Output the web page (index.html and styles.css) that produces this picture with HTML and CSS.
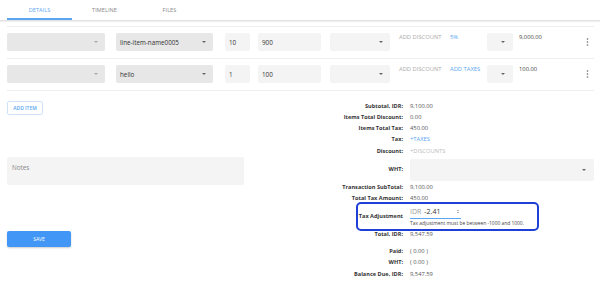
FILE: index.html
```html
<!DOCTYPE html>
<html>
<head>
<meta charset="utf-8">
<link rel="stylesheet" href="styles.css">
</head>
<body>
<div class="page">
  <nav class="tabs">
    <div class="tab active">DETAILS</div>
    <div class="tab">TIMELINE</div>
    <div class="tab">FILES</div>
  </nav>

  <div class="items">
    <div class="row">
      <div class="field f-type dark disabled"><span></span><i class="caret"></i></div>
      <div class="field f-name dark"><span>line-item-name0005</span><i class="caret"></i></div>
      <div class="field f-qty"><span>10</span></div>
      <div class="field f-price"><span>900</span></div>
      <div class="field f-unit"><span></span><i class="caret"></i></div>
      <div class="link f-disc muted">ADD DISCOUNT</div>
      <div class="link f-tax blue">5%</div>
      <div class="field f-taxsel"><span></span><i class="caret"></i></div>
      <div class="amount">9,000.00</div>
      <div class="menu"><svg width="3" height="8" viewBox="0 0 3 8"><circle cx="1.5" cy="1" r="0.8"/><circle cx="1.5" cy="4" r="0.8"/><circle cx="1.5" cy="7" r="0.8"/></svg></div>
    </div>
    <div class="row">
      <div class="field f-type dark disabled"><span></span><i class="caret"></i></div>
      <div class="field f-name dark"><span>hello</span><i class="caret"></i></div>
      <div class="field f-qty"><span>1</span></div>
      <div class="field f-price"><span>100</span></div>
      <div class="field f-unit"><span></span><i class="caret"></i></div>
      <div class="link f-disc muted">ADD DISCOUNT</div>
      <div class="link f-tax blue">ADD TAXES</div>
      <div class="field f-taxsel"><span></span><i class="caret"></i></div>
      <div class="amount">100.00</div>
      <div class="menu"><svg width="3" height="8" viewBox="0 0 3 8"><circle cx="1.5" cy="1" r="0.8"/><circle cx="1.5" cy="4" r="0.8"/><circle cx="1.5" cy="7" r="0.8"/></svg></div>
    </div>
  </div>

  <div class="bottom">
    <div class="left">
      <button class="add-item">ADD ITEM</button>
      <div class="notes">Notes</div>
      <button class="save">SAVE</button>
    </div>
    <div class="summary">
      <div class="srow"><div class="lbl">Subtotal, IDR:</div><div class="val">9,100.00</div></div>
      <div class="srow"><div class="lbl">Items Total Discount:</div><div class="val">0.00</div></div>
      <div class="srow"><div class="lbl">Items Total Tax:</div><div class="val">450.00</div></div>
      <div class="srow"><div class="lbl">Tax:</div><div class="val blue">+TAXES</div></div>
      <div class="srow"><div class="lbl">Discount:</div><div class="val light">+DISCOUNTS</div></div>
      <div class="srow wht"><div class="lbl">WHT:</div><div class="field wsel"><span></span><i class="caret"></i></div></div>
      <div class="srow after-wht"><div class="lbl">Transaction SubTotal:</div><div class="val">9,100.00</div></div>
      <div class="srow"><div class="lbl">Total Tax Amount:</div><div class="val">450.00</div></div>
      <div class="srow adj">
        <div class="lbl">Tax Adjustment</div>
        <div class="adj-val">
          <div class="adj-input"><span class="cur">IDR</span><span class="num">-2.41</span><span class="spin"><i class="up"></i><i class="down"></i></span></div>
          <div class="help">Tax adjustment must be between -1000 and 1000.</div>
        </div>
      </div>
      <div class="srow"><div class="lbl">Total, IDR:</div><div class="val">9,547.59</div></div>
      <div class="srow gap"><div class="lbl">Paid:</div><div class="val">( 0.00 )</div></div>
      <div class="srow"><div class="lbl">WHT:</div><div class="val">( 0.00 )</div></div>
      <div class="srow"><div class="lbl">Balance Due, IDR:</div><div class="val">9,547.59</div></div>
    </div>
  </div>
</div>
</body>
</html>
```

FILE: styles.css
```css
* { box-sizing: border-box; }
html, body { margin: 0; padding: 0; background: #fff; }
body { font-family: "Open Sans", "Noto Sans", sans-serif; color: #333; width: 600px; height: 286px; overflow: hidden; }
.page { padding: 0 6px 0 7px; }

.tabs {
  display: flex;
  height: 21px;
  margin: 0 -6px 0 -7px;
  padding-left: 7px;
  border-bottom: 1px solid #e2e2e2;
  box-shadow: 0 1px 1px rgba(0,0,0,0.06);
}
.tab {
  width: 65px;
  height: 20px;
  line-height: 20px;
  text-align: center;
  font-size: 5.5px;
  color: #888;
  letter-spacing: 0.1px;
}
.tab.active { color: #5aa6f0; border-bottom: 2px solid #5aa6f0; line-height: 20px; height: 20px; }

.items { margin-top: 5px; }
.row {
  display: flex;
  align-items: flex-start;
  border-top: 1px solid #eee;
  padding: 6px 0 7px;
}
.field {
  height: 18px;
  border-radius: 2px;
  background: #f4f4f4;
  display: flex;
  align-items: center;
  justify-content: space-between;
  padding: 0 7px 0 4px;
  font-size: 6.3px;
  color: #333;
}
.field.dark { background: #e7e7e7; }
.caret {
  width: 0; height: 0;
  border-left: 2.2px solid transparent;
  border-right: 2.2px solid transparent;
  border-top: 2.4px solid #666;
}
.disabled .caret { border-top-color: #aaa; }
.f-type { width: 98px; margin-right: 11px; }
.f-name { width: 97px; margin-right: 12px; }
.f-qty { width: 25px; margin-right: 8px; }
.f-price { width: 63px; margin-right: 9px; }
.f-unit { width: 60px; margin-right: 9px; }
.link { font-size: 5.8px; line-height: 9px; }
.f-disc { width: 51px; }
.f-tax { width: 37px; }
.f-taxsel { width: 26px; margin-right: 6px; padding-right: 8px; justify-content: flex-end; }
.muted { color: #aaa; }
.blue { color: #5aa6f0; }
.light { color: #bbb; }
.amount { flex: 1; font-size: 5.8px; line-height: 9px; color: #444; }
.menu { width: 14px; height: 18px; display: flex; align-items: center; justify-content: center; }
.menu svg { fill: #666; }

.bottom {
  display: flex;
  border-top: 1px solid #eee;
  padding-top: 9.5px;
}
.left { width: 293px; display: flex; flex-direction: column; align-items: flex-start; }
.add-item {
  width: 36px; height: 14px;
  border: 1px solid #cfe2fa;
  border-radius: 2px;
  background: #fff;
  color: #5aa6f0;
  font-family: inherit;
  font-size: 5px;
  font-weight: 600;
  padding: 0;
}
.notes {
  margin-top: 42px;
  width: 237px; height: 28px;
  background: #f4f4f4;
  border-radius: 2px;
  padding: 6px 5px;
  font-size: 6.3px;
  line-height: 9px;
  color: #888;
}
.save {
  margin-top: 46px;
  width: 64px; height: 16px;
  background: #4196f6;
  border: 0;
  border-radius: 2px;
  color: #fff;
  font-family: inherit;
  font-size: 5px;
  padding: 0;
  box-shadow: 0 1px 2px rgba(0,0,0,0.2);
}

.summary { flex: 1; }
.srow {
  display: grid;
  grid-template-columns: 103px 1fr;
  column-gap: 7px;
  line-height: 11.25px;
  font-size: 5.6px;
}
.lbl { text-align: right; font-weight: 700; color: #333; }
.val { color: #555; font-size: 5.8px; }
.val.blue { color: #5aa6f0; }
.val.light { color: #bbb; }
.wht { margin-top: 2px; align-items: center; }
.wsel { height: 22px; padding-right: 8px; justify-content: flex-end; }
.after-wht { margin-top: 1px; }
.srow.adj {
  position: relative;
  align-items: center;
  padding: 1px 0 2px;
  margin-top: 0.5px;
}
.srow.adj::after {
  content: "";
  position: absolute;
  left: 56px; right: 55px; top: -2.5px; bottom: -2.5px;
  border: 2px solid #1e40d6;
  border-radius: 5px;
}
.adj-input {
  width: 51px;
  height: 13px;
  border-bottom: 1px solid #5aa6f0;
  display: flex;
  align-items: center;
  font-size: 7px;
  line-height: 12px;
}
.cur { color: #999; margin-right: 3px; }
.num { color: #333; flex: 1; }
.spin { display: flex; flex-direction: column; gap: 1px; margin-right: 2px; }
.spin i { width: 0; height: 0; border-left: 1.3px solid transparent; border-right: 1.3px solid transparent; }
.spin .up { border-bottom: 1.5px solid #666; }
.spin .down { border-top: 1.5px solid #666; }
.help { font-size: 4.9px; line-height: 7px; color: #444; margin-top: 1px; }
.gap { margin-top: 6px; }
```
